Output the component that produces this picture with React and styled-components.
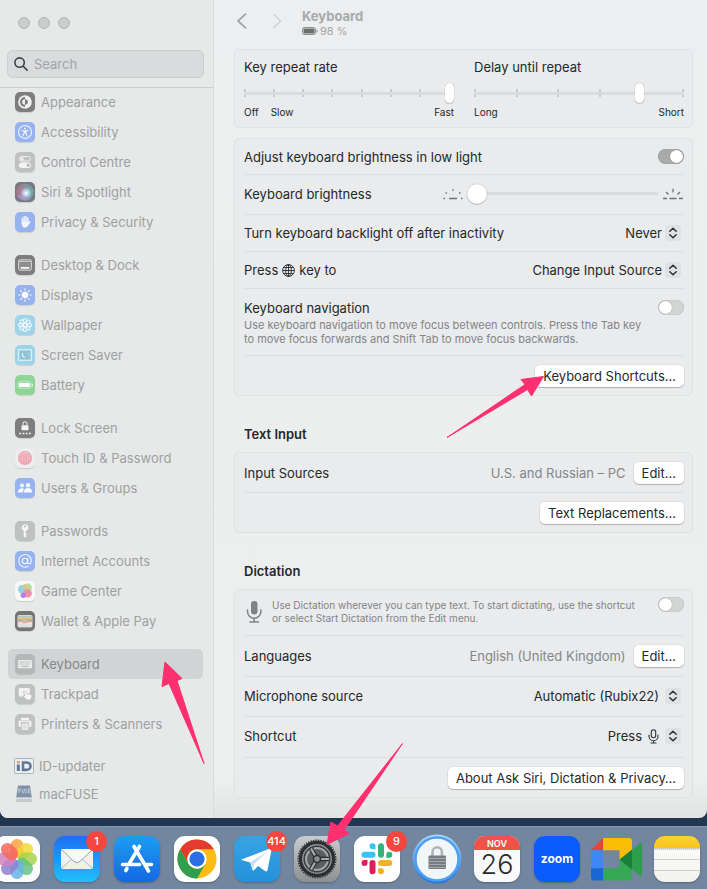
import React, { useState } from "react";
import styled, { createGlobalStyle, css } from "styled-components";

const GlobalStyle = createGlobalStyle`
  * {
    box-sizing: border-box;
  }
  body {
    margin: 0;
    background: #22364f;
    font-family: Inter, "Liberation Sans", sans-serif;
    font-size: 13px;
    line-height: 16px;
    color: #262829;
    overflow-x: hidden;
  }
  button,
  input,
  select {
    font: inherit;
    color: inherit;
  }
`;

// Layout

const Desktop = styled.div`
  position: relative;
  display: flex;
  flex-direction: column;
  gap: 8px;
  min-height: 100vh;
  overflow: hidden;
`;

const Window = styled.div`
  display: flex;
  flex: 1;
  border-radius: 0 0 8px 8px;
  overflow: hidden;
  background: linear-gradient(to bottom, #eceeef 0, #edefee 780px, #e2e3e3 100%);
`;

const Sidebar = styled.aside`
  width: 214px;
  flex-shrink: 0;
  padding-bottom: 10px;
  border-right: 1px solid #d9dcdd;
  background: #e7e8e8;
`;

const Content = styled.main`
  flex: 1;
  min-width: 0;
  padding: 0 14px 20px 20px;
`;

// Sidebar

const Lights = styled.div`
  display: flex;
  gap: 8px;
  padding: 17px 18px 21px;
`;

const Light = styled.button`
  width: 12px;
  height: 12px;
  padding: 0;
  border: 1px solid #b4b6b6;
  border-radius: 50%;
  background: #cbcdcd;
`;

const SearchBox = styled.label`
  display: flex;
  align-items: center;
  gap: 6px;
  height: 28px;
  margin: 0 9px 9px 7px;
  padding: 0 6px;
  border: 1px solid #cdd0d1;
  border-radius: 6px;
  background: #d9dbdd;
`;

const SearchInput = styled.input`
  flex: 1;
  min-width: 0;
  padding: 0;
  border: none;
  outline: none;
  background: none;
  &::placeholder {
    color: #a2a5a7;
  }
`;

const Nav = styled.nav`
  display: flex;
  flex-direction: column;
  gap: 13px;
  box-shadow: inset 0 1px 0 #cccfd0;
`;

const NavGroup = styled.div`
  display: flex;
  flex-direction: column;
`;

const NavItem = styled.a`
  display: flex;
  align-items: center;
  gap: ${(p) => (p.$small ? 5 : 6)}px;
  height: ${(p) => (p.$small ? 28 : 30)}px;
  margin: 0 10px 0 8px;
  padding-left: ${(p) => (p.$small ? 6 : 7)}px;
  border-radius: 5px;
  color: #9da1a2;
  text-decoration: none;
  ${(p) =>
    p.$active &&
    css`
      background: #d1d4d4;
      color: #84888a;
    `}
`;

const NavIcon = styled.svg`
  width: 20px;
  height: 20px;
  flex-shrink: 0;
  border-radius: 5px;
  background: ${(p) => p.$bg};
  box-shadow: ${(p) => (p.$flat ? "none" : "0 1px 1px rgba(0, 0, 0, 0.12)")};
`;

// Title bar

const Header = styled.header`
  display: flex;
  height: 49px;
  padding-top: 8px;
`;

const HeaderButton = styled.button`
  width: 16px;
  height: 28px;
  margin-right: 19px;
  padding: 0;
  border: none;
  background: none;
  color: ${(p) => (p.disabled ? "#cfd1d2" : "#a3a5a6")};
`;

const TitleBlock = styled.div`
  margin-left: -2px;
`;

const Title = styled.h1`
  margin: 0;
  font-size: 13px;
  line-height: 16px;
  font-weight: 700;
  color: #a8aaab;
`;

const BatteryStatus = styled.div`
  display: flex;
  align-items: center;
  gap: 2px;
  font-size: 11px;
  line-height: 14px;
  color: #a4a6a7;
`;

// Panels

const Heading = styled.h2`
  margin: 0;
  padding: 30px 10px 10px;
  font-size: 13px;
  line-height: 16px;
  font-weight: 600;
`;

const Panel = styled.section`
  padding: 0 8px 0 9px;
  border: 1px solid #dfe1e2;
  border-radius: 5px;
  background: #e9ebec;
  & + & {
    margin-top: 10px;
  }
`;

const Row = styled.div`
  display: flex;
  align-items: ${(p) => (p.$top ? "flex-start" : "center")};
  justify-content: space-between;
  gap: 8px;
  min-height: ${(p) => p.$height || 40}px;
  padding-top: ${(p) => p.$top || 0}px;
  padding-bottom: ${(p) => p.$bottom || 0}px;
  & + & {
    border-top: 1px solid #dcdedf;
  }
`;

const RowLabel = styled.label`
  display: flex;
  align-items: center;
  gap: 4px;
  flex: 1;
`;

const RowText = styled.div`
  flex: 1;
`;

const Note = styled.p`
  max-width: 410px;
  margin: 2px 0 0;
  font-size: 11px;
  line-height: 14px;
  color: #838587;
`;

const DictationNote = styled.label`
  display: flex;
  gap: 8px;
  font-size: 10px;
  line-height: 13px;
  color: #838587;
`;

const NoteText = styled.span`
  max-width: 374px;
  padding-top: 2px;
`;

const Value = styled.span`
  color: #858788;
`;

const PushButton = styled.button`
  height: 22px;
  padding: 0 8px;
  border: none;
  border-radius: 5px;
  background: #fff;
  box-shadow: 0 0 0 1px rgba(0, 0, 0, 0.04), 0 1px 1px rgba(0, 0, 0, 0.22);
  line-height: 20px;
  white-space: nowrap;
`;

const ButtonRow = styled.div`
  display: flex;
  align-items: center;
  justify-content: flex-end;
  min-height: 40px;
  border-top: 1px solid #dcdedf;
`;

const Toggle = styled.input`
  appearance: none;
  display: flex;
  flex-shrink: 0;
  width: 26px;
  height: 15px;
  margin: 0;
  border-radius: 8px;
  background: #d3d5d5;
  box-shadow: inset 0 0 1px rgba(0, 0, 0, 0.3);
  &::before {
    content: "";
    width: 13px;
    height: 13px;
    margin: 1px;
    border-radius: 50%;
    background: #fff;
    box-shadow: 0 0 1px rgba(0, 0, 0, 0.4);
  }
  &:checked {
    justify-content: flex-end;
    background: #a9abab;
  }
`;

const Popup = styled.span`
  display: flex;
  align-items: center;
  gap: ${(p) => p.$gap || 3}px;
  padding-right: 3px;
`;

const Select = styled.select`
  appearance: none;
  field-sizing: content;
  padding: 0;
  border: none;
  outline: none;
  background: none;
`;

const Stepper = styled.svg`
  width: 16px;
  height: 16px;
  border-radius: 4px;
  background: #dfe1e2;
`;

// Sliders

const SliderPair = styled.div`
  display: grid;
  grid-template-columns: 1fr 1fr;
  gap: 20px;
  padding: 9px 0 8px;
`;

const SliderField = styled.div`
  display: flex;
  flex-direction: column;
`;

const SliderBox = styled.div`
  display: grid;
  margin: 8px 0 2px;
  & > * {
    grid-area: 1 / 1;
  }
`;

const Ticks = styled.div`
  display: flex;
  justify-content: space-between;
  align-items: center;
  padding-right: ${(p) => p.$inset}px;
`;

const Tick = styled.span`
  width: 2px;
  height: 8px;
  background: #c8cacb;
`;

const Range = styled.input`
  appearance: none;
  width: 100%;
  height: 20px;
  margin: 0;
  background: linear-gradient(#dadcdd, #dadcdd) center / 100% 3px no-repeat;
  &::-webkit-slider-thumb {
    appearance: none;
    width: ${(p) => (p.$round ? 20 : 9)}px;
    height: 20px;
    border-radius: 10px;
    background: #fff;
    box-shadow: 0 0 1px rgba(0, 0, 0, 0.4), 0 1px 1px rgba(0, 0, 0, 0.15);
  }
`;

const RangeSlot = styled.div`
  display: flex;
  align-items: center;
  gap: 4px;
  width: 241px;
  & > svg {
    flex-shrink: 0;
  }
`;

const Scale = styled.div`
  display: flex;
  gap: 12px;
  font-size: 10px;
  line-height: 14px;
`;

const ScaleEnd = styled.span`
  margin-left: auto;
`;

// Dock

const Dock = styled.footer`
  display: flex;
  gap: 14px;
  margin-left: -6px;
  padding: 9px 0 7px;
  border-top: 1px solid #8797ab;
  background: #73869f;
`;

const DockItem = styled.button`
  position: relative;
  width: 46px;
  height: 46px;
  flex-shrink: 0;
  display: flex;
  flex-direction: column;
  align-items: center;
  justify-content: center;
  padding: 0;
  border: none;
  border-radius: 11px;
  background: ${(p) => p.$bg || "none"};
  box-shadow: ${(p) => (p.$bg ? "0 1px 2px rgba(0, 0, 0, 0.25)" : "none")};
  & > svg {
    flex-shrink: 0;
  }
`;

const Badge = styled.span`
  position: absolute;
  top: -5px;
  right: -7px;
  min-width: 21px;
  height: 21px;
  border-radius: 11px;
  background: #f5463f;
  color: #fff;
  font-size: 11px;
  font-weight: 500;
  line-height: 21px;
`;

const Month = styled.span`
  width: 100%;
  height: 14px;
  border-radius: 11px 11px 0 0;
  background: #f0524a;
  color: #fff;
  font-size: 9px;
  font-weight: 600;
  line-height: 15px;
`;

const Day = styled.span`
  height: 32px;
  font-size: 27px;
  font-weight: 300;
  line-height: 30px;
  color: #2b2b2b;
`;

const ZoomName = styled.span`
  color: #fff;
  font-size: 12px;
  font-weight: 700;
`;

const Annotations = styled.svg`
  position: absolute;
  top: 0;
  left: 0;
  width: 707px;
  height: 889px;
  pointer-events: none;
  fill: #ff2f70;
  stroke: #ff2f70;
  stroke-linejoin: round;
`;

const BLUE = "#96b3f0";
const GREY = "#bfc1c1";
const DARK = "#7d7d7d";
const CYAN = "#9fd4e8";

const navGroups = [
  [
    {
      name: "Appearance",
      bg: DARK,
      art: (
        <>
          <circle cx="10" cy="10" r="6.8" fill="#f1f1f1" />
          <path d="M10 5a5 5 0 0 0 0 10z" fill="#7d7d7d" />
          <path d="M10 7.2a2.800 2.800 0 0 0 0 5.600z" fill="#f1f1f1" />
          <path d="M10 7.2a2.800 2.800 0 0 1 0 5.600z" fill="#7d7d7d" />
        </>
      ),
    },
    {
      name: "Accessibility",
      bg: BLUE,
      art: (
        <>
          <circle cx="10" cy="10" r="6.5" fill="none" stroke="#eef3fc" strokeWidth="1.1" />
          <circle cx="10" cy="6.5" r="1" fill="#eef3fc" />
          <path d="M6.800 8.500l2.300.5v2l-1.100 3M13.200 8.500l-2.300.5v2l1.100 3M10 8.800v2.200" fill="none" stroke="#eef3fc" strokeWidth="1.1" strokeLinecap="round" />
        </>
      ),
    },
    {
      name: "Control Centre",
      bg: GREY,
      art: (
        <>
          <rect x="4.5" y="4.5" width="11" height="4.6" rx="2.3" fill="none" stroke="#efefef" />
          <circle cx="7" cy="6.8" r="1.7" fill="#efefef" />
          <rect x="4" y="10.5" width="12" height="5.5" rx="2.7" fill="#f3f3f3" />
          <circle cx="13.2" cy="13.2" r="1.6" fill="#b8baba" />
        </>
      ),
    },
    {
      name: "Siri & Spotlight",
      bg: "#747a7f",
      art: (
        <>
          <defs>
            <radialGradient id="siri-glow" cx=".55" cy=".55" r=".5">
              <stop offset="0" stopColor="#fff" />
              <stop offset=".35" stopColor="#c9dcf4" />
              <stop offset="1" stopColor="#c9dcf4" stopOpacity="0" />
            </radialGradient>
            <linearGradient id="siri-ring" x1="0" y1="0" x2="1" y2=".2">
              <stop offset="0" stopColor="#c4667d" />
              <stop offset=".5" stopColor="#8d8fa0" />
              <stop offset="1" stopColor="#5fae9f" />
            </linearGradient>
          </defs>
          <circle cx="10" cy="10" r="8.6" fill="url(#siri-ring)" />
          <path d="M2 12.500a8.400 8.400 0 0 0 14.500 3c-4 .8-9.500.5-14.500-3z" fill="#b08fd0" />
          <circle cx="10.5" cy="10.5" r="6" fill="url(#siri-glow)" />
        </>
      ),
    },
    {
      name: "Privacy & Security",
      bg: BLUE,
      art: (
        <g stroke="#f1f4fb" strokeLinecap="round" fill="none" strokeWidth="1.5">
          <path d="M7.400 11V6.200M9.200 10V4.700M11 10V4.700M12.800 10.500V6" />
          <path d="M7.400 10.500h5.400v1.500a2.800 3 0 0 1-4.600 2.200z" fill="#f1f4fb" />
          <path d="M12.800 12.500l2-2.800M7.300 11.500l1.200 2.700" />
        </g>
      ),
    },
  ],
  [
    {
      name: "Desktop & Dock",
      bg: DARK,
      art: (
        <>
          <rect x="3.6" y="4.8" width="12.8" height="10.4" rx="1.5" fill="#8f8f8f" stroke="#d8d8d8" />
          <path d="M4 6.500h12" stroke="#c8c8c8" />
          <rect x="5.8" y="12" width="8.4" height="1.7" fill="#fff" />
        </>
      ),
    },
    {
      name: "Displays",
      bg: BLUE,
      art: (
        <>
          <circle cx="10" cy="10" r="3.2" fill="#fff" />
          <path d="M10 3.600v1.600M10 14.800v1.600M3.600 10h1.600M14.800 10h1.600M5.500 5.500l1.100 1.100M13.400 13.400l1.100 1.100M14.500 5.500l-1.100 1.100M6.600 13.400l-1.100 1.100" stroke="#eef2fc" strokeWidth="1.1" strokeLinecap="round" />
        </>
      ),
    },
    {
      name: "Wallpaper",
      bg: CYAN,
      art: (
        <g fill="none" stroke="#e9f6fa" strokeWidth="1.2">
          <circle cx="10" cy="10" r="1.7" />
          {[0, 45, 90, 135, 180, 225, 270, 315].map((angle) => (
            <ellipse key={angle} cx="10" cy="5.7" rx="1.7" ry="2.2" transform={`rotate(${angle} 10 10)`} />
          ))}
        </g>
      ),
    },
    {
      name: "Screen Saver",
      bg: CYAN,
      art: (
        <>
          <rect x="3.5" y="4.6" width="13" height="10.8" fill="none" stroke="#d9f0f7" />
          <rect x="5.2" y="6.2" width="9.6" height="7.6" fill="#8dbfd3" />
          <path d="M8.600 7.300a2.800 2.800 0 1 0 3.200 4.300 2.700 2.700 0 0 1-3.200-4.300z" fill="#f4fbfd" />
          <path d="M12.500 8.200h.9M13.400 10.200h.5" stroke="#f4fbfd" />
        </>
      ),
    },
    {
      name: "Battery",
      bg: "#8fd598",
      art: (
        <>
          <rect x="2.8" y="6.8" width="13.2" height="6.4" rx="1.8" fill="none" stroke="#d7f1da" strokeWidth=".8" />
          <rect x="4" y="8" width="10.8" height="4" rx=".8" fill="#fff" />
          <path d="M17.300 9v2" stroke="#e6f7e8" strokeWidth="1.2" strokeLinecap="round" />
        </>
      ),
    },
  ],
  [
    {
      name: "Lock Screen",
      bg: DARK,
      art: (
        <>
          <rect x="6.5" y="7.2" width="7" height="5" rx=".8" fill="#f5f5f5" />
          <path d="M8 7.200V5.700a2 2 0 0 1 4 0v1.500" fill="none" stroke="#e9e9e9" strokeWidth="1.1" />
          <path d="M4.300 15.500h1.800M7.600 15.500h1.800M10.800 15.500h1.800M14 15.500h1.800" stroke="#f5f5f5" strokeWidth="1.7" />
        </>
      ),
    },
    {
      name: "Touch ID & Password",
      bg: "#eeeded",
      art: (
        <>
          <circle cx="10" cy="10" r="7" fill="#f0a3b0" />
          <path d="M5.500 12.500V10a4.500 4.500 0 0 1 9 0v2.500M7.500 14.500V10a2.500 2.500 0 0 1 5 0v4.500M10 9.500v6M4.500 8a6 6 0 0 1 11 0" fill="none" stroke="#f6cdd4" strokeWidth=".7" />
        </>
      ),
    },
    {
      name: "Users & Groups",
      bg: BLUE,
      art: (
        <g fill="#f6f9ff">
          <circle cx="7" cy="7.5" r="2" />
          <circle cx="13" cy="7.3" r="2.2" />
          <path d="M2.800 14.500c0-2.600 1.600-4.200 4.100-4.200 1 0 1.800.3 2.300.8-1 .9-1.400 2-1.400 3.400z" />
          <path d="M8.800 14.500c0-2.800 1.600-4.400 4.200-4.400s4.200 1.600 4.200 4.400z" />
        </g>
      ),
    },
  ],
  [
    {
      name: "Passwords",
      bg: GREY,
      art: (
        <>
          <path d="M10 3.200a3.400 3.400 0 0 0-1.300 6.500v5.600l1.300 1.500 1.700-1.700-1-1.100 1-1.200-1-1.200V9.900A3.400 3.400 0 0 0 10 3.200z" fill="#f5f5f5" />
          <circle cx="10" cy="5.4" r="1" fill="#b3b5b5" />
        </>
      ),
    },
    {
      name: "Internet Accounts",
      bg: BLUE,
      art: (
        <g fill="none" stroke="#f0f5fe" strokeWidth="1.1" strokeLinecap="round">
          <circle cx="10" cy="10" r="2.7" />
          <path d="M12.900 7.200l-.4 4.200c-.1 2 3.800 2.200 3.800-1.600a6.300 6.300 0 1 0-3.100 5.500" />
        </g>
      ),
    },
    {
      name: "Game Center",
      bg: "#f8f8f8",
      art: (
        <>
          <circle cx="12.3" cy="7" r="4.6" fill="#b9dc9a" />
          <circle cx="7.3" cy="8.3" r="4.3" fill="#79cfe2" opacity=".85" />
          <circle cx="10" cy="5.9" r="2.8" fill="#f3c37f" opacity=".7" />
          <circle cx="12.7" cy="12.4" r="4.2" fill="#f48aa0" opacity=".95" />
          <circle cx="8.3" cy="14.2" r="2.7" fill="#b781e0" />
        </>
      ),
    },
    {
      name: "Wallet & Apple Pay",
      bg: "#757575",
      art: (
        <>
          <rect x="2.5" y="4" width="15" height="12.5" rx="1.8" fill="#d9d8d3" />
          <path d="M3 6h14" stroke="#93b6ac" />
          <path d="M3 7.200h14" stroke="#e8c47e" strokeWidth="1.4" />
          <path d="M3 8.700h14" stroke="#a6c290" strokeWidth="1.4" />
          <path d="M3 10h4l1.500 1.200h3L13 10h4" fill="none" stroke="#e0938b" strokeWidth="1.3" />
          <path d="M3 11h4l1.500 1h3l1.500-1h4v4.500H3z" fill="#e2e2e0" />
        </>
      ),
    },
  ],
  [
    {
      name: "Keyboard",
      bg: "#b5b8b8",
      active: true,
      art: (
        <>
          <rect x="3" y="6" width="14" height="8.2" rx="1.2" fill="#e9eaea" />
          <path d="M4.500 8h11M4.500 10h11" stroke="#b5b8b8" strokeDasharray="1.2 .6" />
          <path d="M6.500 12.300h7" stroke="#b5b8b8" />
        </>
      ),
    },
    {
      name: "Trackpad",
      bg: GREY,
      art: (
        <>
          <rect x="3.8" y="4" width="11" height="8.5" rx="1" fill="#f2f2f2" />
          <path d="M8.300 7.500c.8-.8 1.500-.3 2.100.4l1.700 2 3.300.2c1 .3 1.600 1.400 1.500 2.500-.1 2.200-1.300 3.500-3.300 3.500-1.800 0-2.700-.8-3.600-1.900l-2-2.300c.3-1 1.200-.8 2 0z" fill="#f7f7f7" stroke="#b9bbbb" strokeWidth=".8" />
        </>
      ),
    },
    {
      name: "Printers & Scanners",
      bg: GREY,
      art: (
        <>
          <rect x="6" y="3.8" width="8" height="2.2" fill="#f2f2f2" />
          <rect x="3.6" y="6.6" width="12.8" height="6.5" rx="1.3" fill="#f2f2f2" />
          <path d="M5.500 8.300h9" stroke="#b9bbbb" strokeWidth=".8" />
          <rect x="6.2" y="9.8" width="7.6" height="6.4" fill="#f7f7f7" stroke="#b9bbbb" strokeWidth=".8" />
          <path d="M7.600 12h4.800M7.600 14h4.800" stroke="#b9bbbb" strokeWidth=".8" />
        </>
      ),
    },
  ],
  [
    {
      name: "ID-updater",
      bg: "none",
      small: true,
      art: (
        <>
          <rect x=".5" y="2.5" width="19" height="15" fill="#edf0f2" stroke="#a9b3c0" />
          <rect x="2.8" y="5" width="3" height="2.5" fill="#e79b72" />
          <rect x="2.8" y="8.5" width="3" height="6.5" fill="#60779b" />
          <path d="M9 6.500h3.200c3 0 4.300 1.600 4.300 3.700s-1.500 3.700-4.300 3.700H9z" fill="none" stroke="#60779b" strokeWidth="2.6" />
        </>
      ),
    },
    {
      name: "macFUSE",
      bg: "none",
      small: true,
      art: (
        <>
          <path d="M4 1.500h12l1.800 12H2.200z" fill="#7f92aa" />
          <rect x="2.2" y="13.5" width="15.6" height="4.5" fill="#c7cacc" />
          <path d="M2.200 14.500h15.600" stroke="#dfe1e2" />
          <path d="M4.800 9V5h2.400M4.800 7h2M8.200 5v3q0 1 1 1t1-1V5M13 5.300c-1.600-.8-2.200 1.100-.9 1.600s.9 2.500-.9 1.800M16.500 5H14.400v4h2.300M14.400 7h1.700" fill="none" stroke="#cbd5e2" strokeWidth=".8" />
        </>
      ),
    },
  ],
];

function SelectPopup({ id, value, gap, children }) {
  return (
    <Popup $gap={gap}>
      <Select id={id} defaultValue={value}>
        <option>{value}</option>
      </Select>
      {children}
      <Stepper viewBox="0 0 16 16" fill="none" stroke="#2f3132" strokeWidth="1.5" strokeLinecap="round" strokeLinejoin="round">
        <path d="M4.800 6.300L8 3.200l3.200 3.100M4.800 9.700L8 12.800l3.200-3.100" />
      </Stepper>
    </Popup>
  );
}

function TickSlider({ id, label, count, value, inset, children }) {
  return (
    <SliderField>
      <label htmlFor={id}>{label}</label>
      <SliderBox>
        <Ticks $inset={inset}>
          {Array.from({ length: count }, (_, i) => (
            <Tick key={i} />
          ))}
        </Ticks>
        <Range id={id} type="range" min="0" max={count - 1} defaultValue={value} />
      </SliderBox>
      <Scale>{children}</Scale>
    </SliderField>
  );
}

const petals = ["#f9a33c", "#f0d935", "#a9d24e", "#66c381", "#68b0e4", "#8d80cc", "#ce83bd", "#f4685a"];

function DockBar() {
  return (
    <Dock>
      <DockItem $bg="#fdfdfd" aria-label="Photos">
        <svg width="46" height="46" viewBox="0 0 46 46">
          {petals.map((color, i) => (
            <rect
              key={color}
              x="16.5"
              y="3"
              width="13"
              height="19"
              rx="6.5"
              fill={color}
              opacity=".85"
              transform={`rotate(${i * 45} 23 23)`}
            />
          ))}
        </svg>
      </DockItem>
      <DockItem $bg="linear-gradient(#1e6ff2, #1fc0fb)" aria-label="Mail">
        <svg width="46" height="46" viewBox="0 0 46 46">
          <rect x="7" y="13" width="32" height="20" rx="2" fill="#eef0f1" />
          <path d="M8 32l11-10M38 32L27 22" stroke="#b3b6b8" />
          <path d="M7.500 13.500L20 25.500q3 2.500 6 0l12.500-12" fill="#f8f9f9" stroke="#9fa3a6" />
        </svg>
        <Badge>1</Badge>
      </DockItem>
      <DockItem $bg="linear-gradient(#1d9df2, #1568e3)" aria-label="App Store">
        <svg width="46" height="46" viewBox="0 0 46 46" fill="none" stroke="#fff" strokeWidth="3.6" strokeLinecap="round">
          <path d="M25.500 10.500L15 28M20 10.500L34.500 35M8.500 28.500h17M32 28.500h5.500M13 32.500l-1.200 2" />
        </svg>
      </DockItem>
      <DockItem $bg="#fff" aria-label="Chrome">
        <svg width="46" height="46" viewBox="0 0 46 46">
          <circle cx="23" cy="23" r="19.5" fill="#fbbc14" />
          <path d="M6.100 13.200A19.500 19.500 0 0 1 39.900 13.300H23a9.700 9.700 0 0 0-8.400 14.600z" fill="#e33b2e" />
          <path d="M6.100 13.200A19.500 19.500 0 0 0 23 42.500L31.400 27.900a9.700 9.700 0 0 1-16.800 0z" fill="#2f9e4f" />
          <circle cx="23" cy="23" r="9.7" fill="#fff" />
          <circle cx="23" cy="23" r="7.6" fill="#2a6fe6" />
        </svg>
      </DockItem>
      <DockItem $bg="linear-gradient(#36a4e3, #2491dc)" aria-label="Telegram">
        <svg width="46" height="46" viewBox="0 0 46 46">
          <path d="M8 23.300L36 12.500c1.300-.5 1.700.3 1.500 1.500L33.500 34c-.3 1.500-1.200 1.800-2.500 1l-7-5-4 4.200c-.8.7-1.500.4-1.700-.6l-2.100-7.200-8-2.200c-1-.3-1-.7-.2-.9z" fill="#fff" />
          <path d="M16.500 26.200L33 15.800 20 28l-1 6z" fill="#c4dff1" />
        </svg>
        <Badge>414</Badge>
      </DockItem>
      <DockItem $bg="linear-gradient(#c9ccce, #8d9092)" aria-label="System Settings">
        <svg width="46" height="46" viewBox="0 0 46 46" fill="none">
          <circle cx="23" cy="23" r="18.5" fill="#8d9092" stroke="#3c3e40" strokeWidth="2" strokeDasharray="1.5 1" />
          <circle cx="23" cy="23" r="16.5" stroke="#2b2d2f" strokeWidth="3" />
          <circle cx="23" cy="23" r="12.5" fill="#5b5e60" stroke="#3a3c3e" strokeWidth="2" />
          <circle cx="23" cy="23" r="11" stroke="#a4a7a9" strokeWidth="2" />
          <path d="M23 23L17 12.500M23 23h12M23 23l-6 10.500" stroke="#2b2d2f" strokeWidth="4.5" />
          <path d="M23 23L17 12.500M23 23h12M23 23l-6 10.500" stroke="#a9acae" strokeWidth="2.2" />
          <circle cx="23" cy="23" r="3.5" fill="#8b8e90" stroke="#2b2d2f" strokeWidth="1.5" />
        </svg>
      </DockItem>
      <DockItem $bg="#fff" aria-label="Slack">
        <svg width="46" height="46" viewBox="0 0 46 46">
          <path d="M7.500 18.700a3 3 0 0 1 3-3h8a3 3 0 0 1 0 6h-8a3 3 0 0 1-3-3zM21.500 13.200h-3a3 3 0 1 1 3-3z" fill="#36c5f0" />
          <path d="M27 7.200a3 3 0 0 1 3 3v8.500a3 3 0 0 1-6 0v-8.500a3 3 0 0 1 3-3zM32.300 21.700v-3a3 3 0 1 1 3 3z" fill="#2eb67d" />
          <path d="M38.300 27a3 3 0 0 1-3 3H27a3 3 0 0 1 0-6h8.300a3 3 0 0 1 3 3zM24 32.300h3a3 3 0 1 1-3 3z" fill="#ecb22e" />
          <path d="M18.500 38.300a3 3 0 0 1-3-3V27a3 3 0 0 1 6 0v8.300a3 3 0 0 1-3 3zM13.500 24v3a3 3 0 1 1-3-3z" fill="#e01e5a" />
        </svg>
        <Badge>9</Badge>
      </DockItem>
      <DockItem aria-label="Lock">
        <svg width="50" height="50" viewBox="0 0 50 50">
          <defs>
            <linearGradient id="lock-ring" x1="0" y1="0" x2="0" y2="1">
              <stop offset="0" stopColor="#a9d8fa" />
              <stop offset="1" stopColor="#2474e0" />
            </linearGradient>
          </defs>
          <circle cx="25" cy="25" r="24.5" fill="url(#lock-ring)" />
          <circle cx="25" cy="25" r="21.5" fill="#f1f6f9" stroke="#4c9ff3" strokeWidth="2.4" />
          <path d="M20.500 22v-4a4.700 4.700 0 0 1 9.400 0v4" fill="none" stroke="#b1b5b7" strokeWidth="2.6" />
          <rect x="16.5" y="21.500" width="17.5" height="13.5" rx="1" fill="#777d80" />
          <path d="M16.500 24.500h17.500M16.500 27.500h17.500M16.500 30.500h17.500M16.500 33.500h17.500" stroke="#a4a9ab" />
        </svg>
      </DockItem>
      <DockItem $bg="#fafafa" aria-label="Calendar">
        <Month>NOV</Month>
        <Day>26</Day>
      </DockItem>
      <DockItem $bg="#0b5cff" aria-label="Zoom">
        <ZoomName>zoom</ZoomName>
      </DockItem>
      <DockItem aria-label="Meet">
        <svg width="52" height="43" viewBox="0 0 52 43">
          <path d="M12 0L0 12.300h12z" fill="#ea4335" />
          <path d="M0 12.300h12v18H0z" fill="#4285f4" />
          <path d="M0 30.300h12v12.200H3a3 3 0 0 1-3-3z" fill="#1967d2" />
          <path d="M12 0h26a3 3 0 0 1 3 3v10L28.500 22v-9.700H12z" fill="#fbbc04" />
          <path d="M12 30.300h16.500V21.500L41 31.500v8a3 3 0 0 1-3 3H12z" fill="#34a853" />
          <path d="M28.500 21.500L41 11.500v20z" fill="#188038" />
          <path d="M41 12l7.800-6.600c1-.8 2.200-.4 2.200.9V37c0 1.300-1.200 1.700-2.200.9L41 31.500z" fill="#2f9e4c" />
        </svg>
      </DockItem>
      <DockItem $bg="linear-gradient(#fcd230 0, #f9c51c 12px, #c9c9c6 12px, #fafaf8 14px, #f2f2ef 100%)" aria-label="Notes">
        <svg width="46" height="46" viewBox="0 0 46 46" stroke="#cfcfcc">
          <path d="M0 23.500h46M0 34.500h46" />
          <path d="M1 13h44" stroke="#b3b1a6" strokeDasharray="1 1" />
        </svg>
      </DockItem>
    </Dock>
  );
}

export default function App() {
  const [lowLight, setLowLight] = useState(true);
  const [navigation, setNavigation] = useState(false);
  const [dictation, setDictation] = useState(false);

  return (
    <>
      <GlobalStyle />
      <Desktop>
        <Window>
          <Sidebar>
            <Lights>
              <Light aria-label="Close" />
              <Light aria-label="Minimise" />
              <Light aria-label="Zoom window" />
            </Lights>
            <SearchBox>
              <svg width="14" height="14" viewBox="0 0 14 14" fill="none" stroke="#3f4244" strokeWidth="1.6" strokeLinecap="round">
                <circle cx="5.6" cy="5.6" r="4.7" />
                <path d="M9.200 9.200l3.900 3.900" />
              </svg>
              <SearchInput type="text" placeholder="Search" aria-label="Search" />
            </SearchBox>
            <Nav>
              {navGroups.map((items) => (
                <NavGroup key={items[0].name}>
                  {items.map((item) => (
                    <NavItem key={item.name} href="#" $small={item.small} $active={item.active}>
                      <NavIcon viewBox="0 0 20 20" $bg={item.bg} $flat={item.small}>
                        {item.art}
                      </NavIcon>
                      {item.name}
                    </NavItem>
                  ))}
                </NavGroup>
              ))}
            </Nav>
          </Sidebar>

          <Content>
            <Header>
              <HeaderButton aria-label="Back">
                <svg width="16" height="16" viewBox="0 0 16 16" fill="none" stroke="currentColor" strokeWidth="1.8" strokeLinecap="round" strokeLinejoin="round">
                  <path d="M11.500 1.200L4 8l7.500 6.800" />
                </svg>
              </HeaderButton>
              <HeaderButton aria-label="Forward" disabled>
                <svg width="16" height="16" viewBox="0 0 16 16" fill="none" stroke="currentColor" strokeWidth="1.6" strokeLinecap="round" strokeLinejoin="round">
                  <path d="M5 1.500L11.500 8 5 14.500" />
                </svg>
              </HeaderButton>
              <TitleBlock>
                <Title>Keyboard</Title>
                <BatteryStatus>
                  <svg width="16" height="8" viewBox="0 0 16 8">
                    <rect x=".5" y=".5" width="13" height="7" rx="2" fill="none" stroke="#8d8f90" />
                    <rect x="1.5" y="1.5" width="11" height="5" rx=".5" fill="#6c6e6f" />
                    <path d="M15 3v2" stroke="#8d8f90" strokeLinecap="round" />
                  </svg>
                  98 %
                </BatteryStatus>
              </TitleBlock>
            </Header>

            <Panel>
              <SliderPair>
                <TickSlider id="repeat" label="Key repeat rate" count={8} value={7} inset={4}>
                  <span>Off</span>
                  <span>Slow</span>
                  <ScaleEnd>Fast</ScaleEnd>
                </TickSlider>
                <TickSlider id="delay" label="Delay until repeat" count={6} value={4} inset={0}>
                  <span>Long</span>
                  <ScaleEnd>Short</ScaleEnd>
                </TickSlider>
              </SliderPair>
            </Panel>

            <Panel>
              <Row $height={35}>
                <RowLabel htmlFor="low-light">Adjust keyboard brightness in low light</RowLabel>
                <Toggle id="low-light" type="checkbox" checked={lowLight} onChange={() => setLowLight(!lowLight)} />
              </Row>
              <Row $height={40} $bottom={2}>
                <RowLabel htmlFor="brightness">Keyboard brightness</RowLabel>
                <RangeSlot>
                  <svg width="20" height="12" viewBox="0 0 20 12" fill="none" stroke="#6f7172" strokeWidth="1.4">
                    <path d="M6 10.500h8M.500 10.500h1.500M18 10.500h1.500M2.500 5h1.500M16 5h1.500M9.300 2h1.400" />
                  </svg>
                  <Range id="brightness" type="range" min="0" max="100" defaultValue="0" $round />
                  <svg width="22" height="12" viewBox="0 0 22 12" fill="none" stroke="#6f7172" strokeWidth="1.3">
                    <path d="M7.500 10.500h7M1 10.500h4M17 10.500h4M11 .800v3.700M4 4l2.500 2.500M18 4l-2.500 2.500" />
                  </svg>
                </RangeSlot>
              </Row>
              <Row $height={37}>
                <RowLabel htmlFor="backlight">Turn keyboard backlight off after inactivity</RowLabel>
                <SelectPopup id="backlight" value="Never" />
              </Row>
              <Row $height={37}>
                <RowLabel htmlFor="globe-key">
                  Press
                  <svg width="13" height="13" viewBox="0 0 13 13" fill="none" stroke="#262829" strokeWidth=".9">
                    <circle cx="6.5" cy="6.5" r="5.9" />
                    <ellipse cx="6.5" cy="6.5" rx="2.8" ry="5.9" />
                    <path d="M6.500.700v11.600M.700 6.500h11.600M1.500 3.500h10M1.500 9.500h10" />
                  </svg>
                  key to
                </RowLabel>
                <SelectPopup id="globe-key" value="Change Input Source" />
              </Row>
              <Row $height={67} $top={11}>
                <RowText>
                  <label htmlFor="navigation">Keyboard navigation</label>
                  <Note>
                    Use keyboard navigation to move focus between controls. Press the Tab key
                    to move focus forwards and Shift Tab to move focus backwards.
                  </Note>
                </RowText>
                <Toggle id="navigation" type="checkbox" checked={navigation} onChange={() => setNavigation(!navigation)} />
              </Row>
              <ButtonRow>
                <PushButton>Keyboard Shortcuts…</PushButton>
              </ButtonRow>
            </Panel>

            <Heading>Text Input</Heading>
            <Panel>
              <Row $height={39}>
                <RowText>Input Sources</RowText>
                <Value>U.S. and Russian – PC</Value>
                <PushButton>Edit…</PushButton>
              </Row>
              <ButtonRow>
                <PushButton>Text Replacements…</PushButton>
              </ButtonRow>
            </Panel>

            <Heading>Dictation</Heading>
            <Panel>
              <Row $height={45} $top={7}>
                <DictationNote htmlFor="dictation">
                  <svg width="20" height="32" viewBox="0 2 20 32" fill="none" stroke="#808284" strokeWidth="1.5" strokeLinecap="round">
                    <rect x="7" y="6" width="6.5" height="13.5" rx="3.2" fill="#808284" stroke="none" />
                    <path d="M3.500 15v1.500a6.700 6.700 0 0 0 13.400 0V15M10.200 23.500v3.500M6 27h8.500" />
                  </svg>
                  <NoteText>
                    Use Dictation wherever you can type text. To start dictating, use the shortcut
                    or select Start Dictation from the Edit menu.
                  </NoteText>
                </DictationNote>
                <Toggle id="dictation" type="checkbox" checked={dictation} onChange={() => setDictation(!dictation)} />
              </Row>
              <Row $height={41}>
                <RowText>Languages</RowText>
                <Value>English (United Kingdom)</Value>
                <PushButton>Edit…</PushButton>
              </Row>
              <Row $height={40} $bottom={2}>
                <RowLabel htmlFor="microphone">Microphone source</RowLabel>
                <SelectPopup id="microphone" value="Automatic (Rubix22)" gap={6} />
              </Row>
              <Row $height={41} $bottom={2}>
                <RowLabel htmlFor="shortcut">Shortcut</RowLabel>
                <SelectPopup id="shortcut" value="Press" gap={6}>
                  <svg width="11" height="15" viewBox="0 0 11 15" fill="none" stroke="#303233" strokeWidth="1.1" strokeLinecap="round">
                    <rect x="3.3" y=".8" width="4.4" height="8" rx="2.2" />
                    <path d="M1 6v1.200a4.500 4.500 0 0 0 9 0V6M5.500 11.700V14M3 14h5" />
                  </svg>
                </SelectPopup>
              </Row>
              <ButtonRow>
                <PushButton>About Ask Siri, Dictation &amp; Privacy…</PushButton>
              </ButtonRow>
            </Panel>
          </Content>
        </Window>

        <DockBar />

        <Annotations viewBox="0 0 707 889" aria-hidden="true">
          <path d="M165 662l17 16.500-5 2L204 763.500 169 683.500l-7 3z" />
          <path d="M543.500 376.500L531.500 396l-4-6.500L447 437.500 525 384.500l-4-5z" />
          <path d="M327 844.500l4-22.500 6.500 4L402.500 743.500 344 830l5 3.500z" />
        </Annotations>
      </Desktop>
    </>
  );
}
